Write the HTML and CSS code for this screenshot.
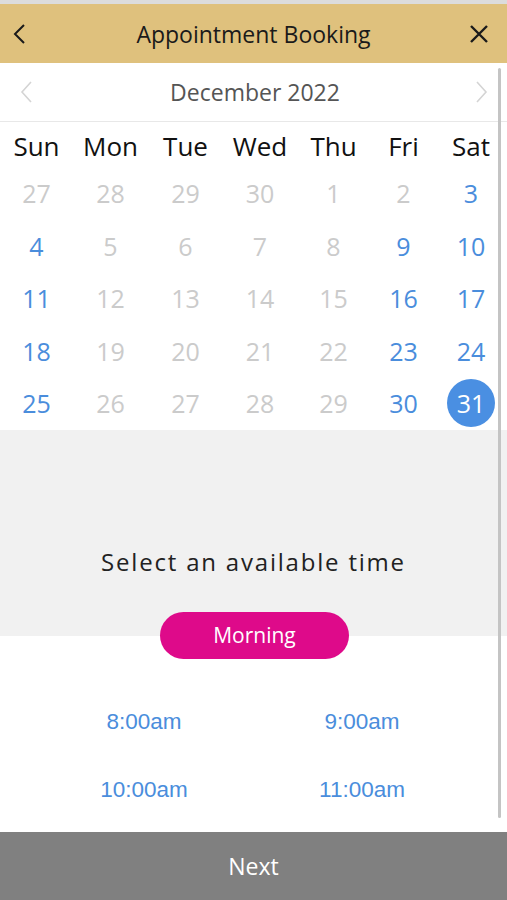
FILE: index.html
```html
<!DOCTYPE html>
<html lang="en">
<head>
    <meta charset="UTF-8">
    <meta name="viewport" content="width=device-width, initial-scale=1.0">
    <title>Appointment Booking</title>
    <link rel="stylesheet" href="styles.css">
</head>
<body>
    <div class="status-strip"></div>
    <header class="topbar">
        <button class="icon-btn" aria-label="Back">
            <svg width="16" height="22" viewBox="0 0 16 22"><path d="M12 2 L3 11 L12 20" fill="none" stroke="#1a1a1a" stroke-width="2"/></svg>
        </button>
        <h1 class="title">Appointment Booking</h1>
        <button class="icon-btn" aria-label="Close">
            <svg width="20" height="20" viewBox="0 0 20 20"><path d="M2 2 L18 18 M18 2 L2 18" fill="none" stroke="#1a1a1a" stroke-width="2.4"/></svg>
        </button>
    </header>

    <main class="content">
        <div class="scrollbar"></div>

        <div class="month-nav">
            <svg class="chev" width="14" height="24" viewBox="0 0 14 24"><path d="M12 2 L3 12 L12 22" fill="none" stroke="#d4d4d4" stroke-width="1.6"/></svg>
            <div class="month">December 2022</div>
            <svg class="chev" width="14" height="24" viewBox="0 0 14 24"><path d="M2 2 L11 12 L2 22" fill="none" stroke="#d4d4d4" stroke-width="1.6"/></svg>
        </div>

        <div class="calendar">
            <div class="wd">Sun</div>
            <div class="wd">Mon</div>
            <div class="wd">Tue</div>
            <div class="wd">Wed</div>
            <div class="wd">Thu</div>
            <div class="wd">Fri</div>
            <div class="wd">Sat</div>

            <div class="day off">27</div>
            <div class="day off">28</div>
            <div class="day off">29</div>
            <div class="day off">30</div>
            <div class="day off">1</div>
            <div class="day off">2</div>
            <div class="day">3</div>

            <div class="day">4</div>
            <div class="day off">5</div>
            <div class="day off">6</div>
            <div class="day off">7</div>
            <div class="day off">8</div>
            <div class="day">9</div>
            <div class="day">10</div>

            <div class="day">11</div>
            <div class="day off">12</div>
            <div class="day off">13</div>
            <div class="day off">14</div>
            <div class="day off">15</div>
            <div class="day">16</div>
            <div class="day">17</div>

            <div class="day">18</div>
            <div class="day off">19</div>
            <div class="day off">20</div>
            <div class="day off">21</div>
            <div class="day off">22</div>
            <div class="day">23</div>
            <div class="day">24</div>

            <div class="day">25</div>
            <div class="day off">26</div>
            <div class="day off">27</div>
            <div class="day off">28</div>
            <div class="day off">29</div>
            <div class="day">30</div>
            <div class="day"><span class="selected">31</span></div>
        </div>

        <section class="time-intro">
            <p class="prompt">Select an available time</p>
        </section>

        <div class="period-row">
            <button class="period">Morning</button>
        </div>

        <div class="slots">
            <a class="slot" href="#">8:00am</a>
            <a class="slot" href="#">9:00am</a>
            <a class="slot" href="#">10:00am</a>
            <a class="slot" href="#">11:00am</a>
        </div>
    </main>

    <footer class="next-bar">Next</footer>
</body>
</html>
```

FILE: styles.css
```css
body {
    margin: 0;
    font-family: "Open Sans", Arial, sans-serif;
    background-color: #fff;
    color: #222;
    width: 507px;
}

.status-strip {
    height: 4px;
    background-color: #dcdcdc;
}

.topbar {
    height: 59px;
    background-color: #dfc17d;
    display: flex;
    align-items: center;
    justify-content: space-between;
    padding: 0 18px 0 12px;
}

.icon-btn {
    background: none;
    border: none;
    padding: 0;
    display: flex;
    align-items: center;
}

.title {
    margin: 0;
    font-size: 23px;
    font-weight: normal;
    color: #1a1a1a;
    padding-left: 10px;
}

.content {
    position: relative;
}

.scrollbar {
    position: absolute;
    top: 5px;
    right: 6px;
    width: 3px;
    height: 750px;
    background-color: #c4c4c4;
    border-radius: 2px;
}

.month-nav {
    height: 58px;
    display: flex;
    align-items: center;
    justify-content: space-between;
    padding: 0 18px 0 19px;
    border-bottom: 1px solid #e8e8e8;
}

.month {
    font-size: 23px;
    color: #555;
    padding-left: 2px;
}

.calendar {
    display: grid;
    grid-template-columns: 73px 75px 75px 74px 73px 67px 68px;
    grid-template-rows: 45px repeat(5, 52.5px);
}

.wd,
.day {
    display: flex;
    align-items: center;
    justify-content: center;
}

.wd {
    font-size: 26px;
    color: #111;
    padding-top: 2px;
}

.day {
    font-size: 25px;
    color: #4a8ddc;
}

.day.off {
    color: #cbcbcb;
}

.selected {
    width: 48px;
    height: 48px;
    border-radius: 50%;
    background-color: #4a8fe2;
    color: #fff;
    display: flex;
    align-items: center;
    justify-content: center;
}

.time-intro {
    background-color: #f1f1f1;
    height: 182px;
    display: flex;
    align-items: flex-end;
    justify-content: center;
}

.prompt {
    margin: 0 0 35px;
    font-size: 24px;
    letter-spacing: 1.8px;
    color: #222;
    line-height: 30px;
}

.period-row {
    height: 47px;
    display: flex;
    justify-content: center;
    background: linear-gradient(#f1f1f1 50%, #fff 50%);
}

.period {
    width: 189px;
    height: 47px;
    border: none;
    border-radius: 24px;
    background-color: #de0a8a;
    color: #fff;
    font-family: "Open Sans", Arial, sans-serif;
    font-size: 21px;
    margin-left: 2px;
}

.slots {
    display: grid;
    grid-template-columns: 218px 218px;
    grid-auto-rows: 68px;
    padding: 29px 0 8px 35px;
}

.slot {
    display: flex;
    align-items: center;
    justify-content: center;
    font-family: "Liberation Sans", Arial, sans-serif;
    font-size: 22.5px;
    color: #4a8ddc;
    text-decoration: none;
}

.next-bar {
    height: 68px;
    background-color: #808080;
    color: #fff;
    font-size: 23px;
    display: flex;
    align-items: center;
    justify-content: center;
}
```
